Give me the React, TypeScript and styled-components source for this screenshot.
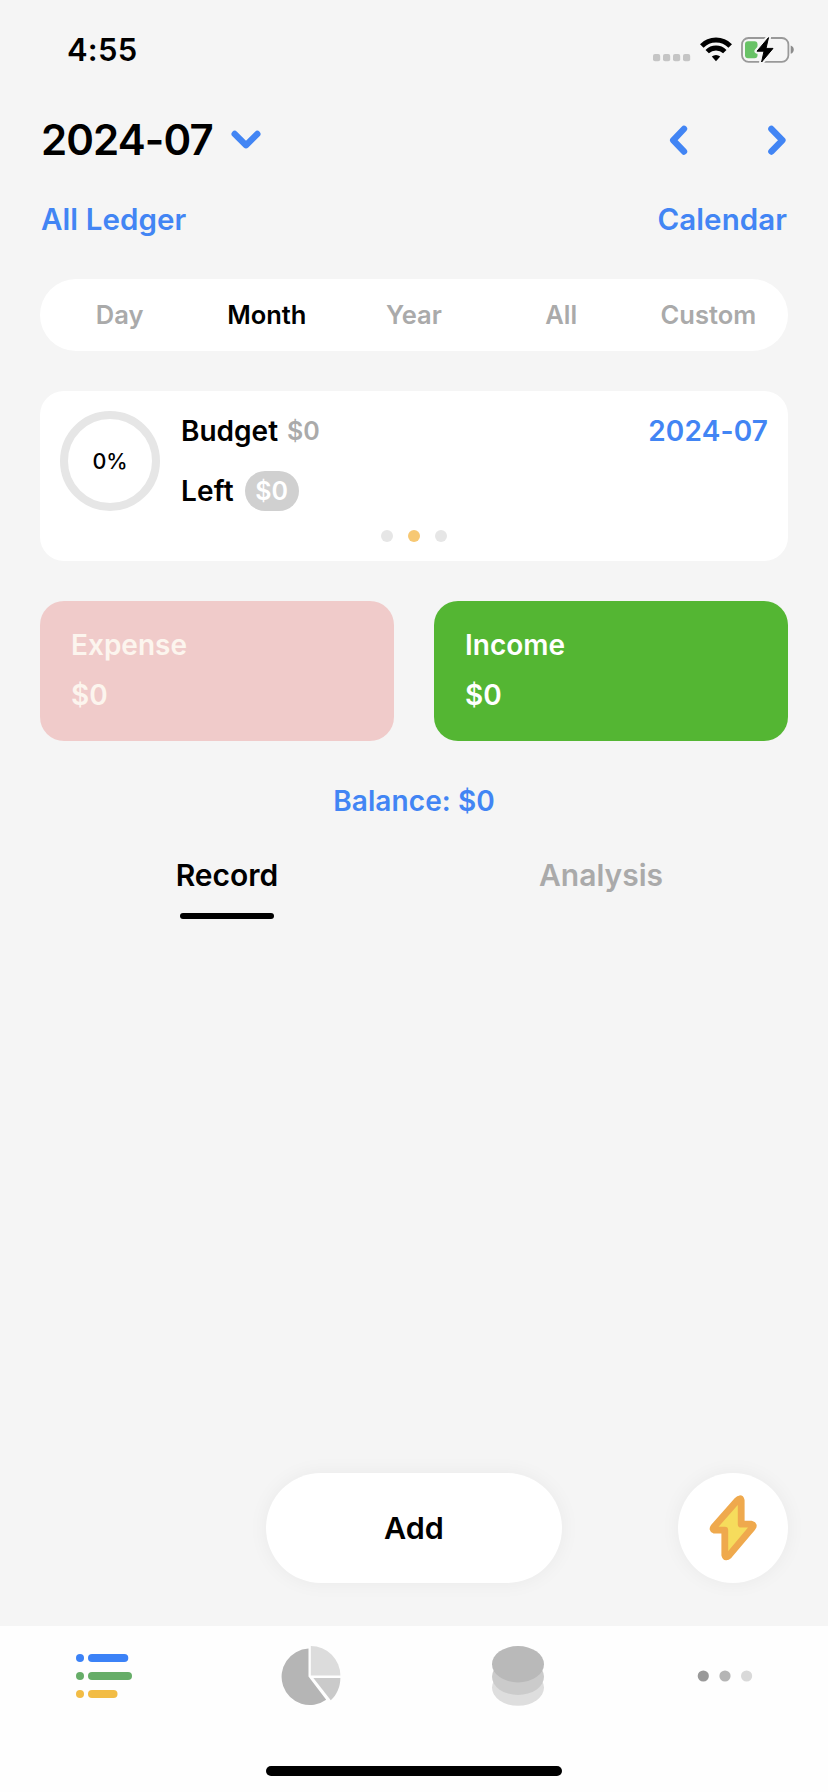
import React from 'react';
import styled, { createGlobalStyle } from 'styled-components';

const GlobalStyle = createGlobalStyle`
  * { box-sizing: border-box; }
  body { margin: 0; background: #f5f5f5; }
`;

const BLUE = '#4285f4';
const MUTED = '#aaaaaa';

const Screen = styled.div`
  width: 828px;
  height: 1792px;
  display: flex;
  flex-direction: column;
  background: #f5f5f5;
  color: #000;
  font-family: Inter, 'Liberation Sans', sans-serif;
  font-weight: 600;
  overflow: hidden;
`;

const Label = styled.span<{ $size: number; $spacing?: number; $color?: string; $weight?: number }>`
  font-size: ${(p) => p.$size}px;
  letter-spacing: ${(p) => p.$spacing ?? 0}px;
  margin-right: ${(p) => -(p.$spacing ?? 0)}px;
  color: ${(p) => p.$color ?? 'inherit'};
  font-weight: ${(p) => p.$weight ?? 600};
  line-height: 40px;
  white-space: nowrap;
`;

const StatusBar = styled.header`
  height: 100px;
  padding: 0 34px 0 67px;
  display: flex;
  align-items: center;
  justify-content: space-between;
`;

const StatusIcons = styled.div`
  display: flex;
  align-items: center;
  gap: 9px;
`;

const HeaderRow = styled.div`
  height: 80px;
  padding: 0 40px 0 41px;
  display: flex;
  align-items: center;
  justify-content: space-between;
`;

const MonthPicker = styled.div`
  display: flex;
  align-items: center;
  gap: 17px;
`;

const Arrows = styled.div`
  display: flex;
  gap: 80px;
`;

const LinkRow = styled.nav`
  height: 78px;
  padding: 0 41px;
  display: flex;
  align-items: center;
  justify-content: space-between;
`;

const RangeTabs = styled.div`
  flex: none;
  margin: 21px 40px 0;
  height: 72px;
  padding: 0 6px;
  border-radius: 36px;
  background: #fff;
  display: grid;
  grid-template-columns: repeat(5, 1fr);
  align-items: center;
  justify-items: center;
`;

const BudgetCard = styled.section`
  flex: none;
  margin: 40px 40px 0;
  height: 170px;
  padding: 20px 20px 0;
  border-radius: 24px;
  background: #fff;
`;

const BudgetTop = styled.div`
  height: 100px;
  display: flex;
`;

const Ring = styled.div`
  width: 100px;
  height: 100px;
  border: 8px solid #e6e6e6;
  border-radius: 50%;
  display: flex;
  align-items: center;
  justify-content: center;
`;

const BudgetLines = styled.div`
  flex: 1;
  margin-left: 21px;
  display: flex;
  flex-direction: column;
  gap: 20px;
`;

const BudgetLine = styled.div`
  height: 40px;
  display: flex;
  align-items: center;
`;

const Amount = styled.div`
  margin-left: 9px;
`;

const Pill = styled.div`
  width: 54px;
  height: 40px;
  margin-left: 11px;
  border-radius: 20px;
  background: #d0d0d0;
  display: flex;
  justify-content: center;
`;

const Push = styled.div`
  margin-left: auto;
`;

const Pager = styled.div`
  margin-top: 19px;
  display: flex;
  justify-content: center;
  gap: 15px;
`;

const PageDot = styled.i<{ $active?: boolean }>`
  width: 12px;
  height: 12px;
  border-radius: 50%;
  background: ${(p) => (p.$active ? '#f7c873' : '#e6e6e6')};
`;

const Totals = styled.div`
  flex: none;
  margin: 40px 40px 0;
  display: grid;
  grid-template-columns: 1fr 1fr;
  gap: 40px;
`;

const TotalCard = styled.div<{ $bg: string; $fg: string }>`
  height: 140px;
  padding: 24px 31px;
  border-radius: 24px;
  background: ${(p) => p.$bg};
  color: ${(p) => p.$fg};
  display: flex;
  flex-direction: column;
  gap: 10px;
`;

const Balance = styled.div`
  margin-top: 40px;
  height: 40px;
  display: flex;
  justify-content: center;
`;

const ViewTabs = styled.div`
  margin: 34px 40px 0;
  display: grid;
  grid-template-columns: 1fr 1fr;
`;

const ViewTab = styled.div`
  display: flex;
  flex-direction: column;
  align-items: center;
`;

const Underline = styled.i`
  width: 94px;
  height: 6px;
  margin-top: 18px;
  border-radius: 3px;
  background: #000;
`;

const Records = styled.main`
  flex: 1;
`;

const Actions = styled.div`
  flex: none;
  height: 110px;
  margin: 0 40px 43px;
  display: grid;
  grid-template-columns: 1fr 296px 1fr;
`;

const RoundButton = styled.div`
  grid-column: 2;
  border-radius: 55px;
  background: #fff;
  box-shadow: 0 0 20px rgba(0, 0, 0, 0.05);
  display: flex;
  align-items: center;
  justify-content: center;
`;

const QuickButton = styled(RoundButton)`
  grid-column: 3;
  justify-self: end;
  width: 110px;
`;

const TabBar = styled.footer`
  flex: none;
  height: 166px;
  background: #fefefe;
  display: flex;
  flex-direction: column;
  align-items: center;
  justify-content: space-between;
  padding-bottom: 16px;
`;

const TabIcons = styled.div`
  width: 100%;
  height: 100px;
  display: grid;
  grid-template-columns: repeat(4, 1fr);
  align-items: center;
  justify-items: center;
`;

const HomeIndicator = styled.i`
  width: 296px;
  height: 10px;
  border-radius: 5px;
  background: #000;
`;

const Chevron = ({ d, w, h }: { d: string; w: number; h: number }) => (
  <svg width={w} height={h} viewBox={`0 0 ${w} ${h}`} fill="none" stroke={BLUE} strokeWidth="6.4" strokeLinecap="round" strokeLinejoin="round">
    <path d={d} />
  </svg>
);

const SignalDots = () => (
  <svg width="38" height="26" viewBox="0 0 38 26" fill="#c5c5c5">
    {[0, 10, 20, 30].map((x) => (
      <rect key={x} x={x} y="17" width="7.2" height="7.2" rx="2" />
    ))}
  </svg>
);

const Wifi = () => (
  <svg width="32" height="26" viewBox="0 0 32 26">
    <path d="M1.8 8.9A20 20 0 0 1 30.2 8.9" fill="none" stroke="#000" strokeWidth="5" />
    <path d="M7.2 14.6A12.6 12.6 0 0 1 24.8 14.6" fill="none" stroke="#000" strokeWidth="4.8" />
    <path d="M11.8 19.6A6.4 6.4 0 0 1 20.2 19.6L16 24.2Z" />
  </svg>
);

const Battery = () => (
  <svg width="53" height="26" viewBox="0 0 53 26">
    <rect x="1" y="1" width="46.4" height="23.8" rx="6.5" fill="none" stroke="#999" strokeWidth="1.8" />
    <path d="M49.7 8.6C51.6 9.2 52.8 10.8 52.8 12.7S51.6 16.2 49.7 16.8Z" fill="#8c8c8c" />
    <rect x="4" y="4.2" width="12.5" height="17" rx="3" fill="#68c266" />
    <path d="M27.5 0.6L16 14.2H23L20.6 25L32 11.4H25Z" fill="#000" stroke="#f5f5f5" strokeWidth="5" strokeLinejoin="round" />
    <path d="M27.5 0.6L16 14.2H23L20.6 25L32 11.4H25Z" fill="#000" stroke="#000" strokeWidth="1" strokeLinejoin="round" />
  </svg>
);

const Bolt = () => (
  <svg width="110" height="110" viewBox="0 0 110 110">
    <path
      d="M59.2 27.6Q62.4 24 63.2 27.5V51.2H73.5Q76.5 52 74.5 54.5L51 82.4Q47.6 85.6 46.8 82V57.2H36.5Q34 56.5 35.8 54Z"
      fill="#f6dc5c"
      stroke="#efa94d"
      strokeWidth="6.8"
      strokeLinejoin="round"
    />
  </svg>
);

const ListIcon = () => (
  <svg width="56" height="44" viewBox="0 0 56 44">
    {[
      ['#3b82f7', 0, 40.3],
      ['#66ad68', 18, 44],
      ['#f2bc45', 36, 29.5],
    ].map(([color, y, w]) => (
      <g key={color} fill={color as string}>
        <circle cx="4" cy={Number(y) + 4} r="4" />
        <rect x="12" y={y} width={w} height="8" rx="4" />
      </g>
    ))}
  </svg>
);

const PieIcon = () => (
  <svg width="60" height="60" viewBox="0 0 60 60">
    <path d="M27.5 2.6A28.2 28.2 0 1 0 45.2 53.7L27.5 30.6Z" fill="#b5b5b5" />
    <path d="M29.8 0A29.6 29.6 0 0 1 59.4 29.5H29.8Z" fill="#dcdcdc" />
    <path d="M32.4 31.9H59.4C59.2 40.8 56 48.4 49.8 54.3Z" fill="#cacaca" />
  </svg>
);

const CoinsIcon = () => (
  <svg width="52" height="60" viewBox="0 0 52 60">
    <ellipse cx="26" cy="41.6" rx="26" ry="18.2" fill="#dedede" />
    <ellipse cx="26" cy="30.8" rx="26" ry="18.2" fill="#cbcbcb" />
    <ellipse cx="26" cy="18.2" rx="26" ry="18.2" fill="#b9b9b9" />
  </svg>
);

const MoreIcon = () => (
  <svg width="56" height="12" viewBox="0 0 56 12">
    <circle cx="6.3" cy="6" r="5.6" fill="#999" />
    <circle cx="28" cy="6" r="5.6" fill="#b5b5b5" />
    <circle cx="49.6" cy="6" r="5.6" fill="#d9d9d9" />
  </svg>
);

const ranges = ['Day', 'Month', 'Year', 'All', 'Custom'];

export default function App() {
  return (
    <Screen>
      <GlobalStyle />
      <StatusBar>
        <Label $size={31} $spacing={0.2}>4:55</Label>
        <StatusIcons>
          <SignalDots />
          <Wifi />
          <Battery />
        </StatusIcons>
      </StatusBar>
      <HeaderRow>
        <MonthPicker>
          <Label $size={42} $spacing={-0.9}>2024-07</Label>
          <Chevron w={30} h={20} d="M3.7 4L15 15.2L26.3 4" />
        </MonthPicker>
        <Arrows>
          <Chevron w={20} h={30} d="M16 3.9L5.2 15.2L16 26.5" />
          <Chevron w={20} h={30} d="M3.4 3.9L14.4 15.2L3.4 26.5" />
        </Arrows>
      </HeaderRow>
      <LinkRow>
        <Label $size={29.5} $spacing={0.08} $color={BLUE}>All Ledger</Label>
        <Label $size={29.5} $spacing={0.08} $color={BLUE}>Calendar</Label>
      </LinkRow>
      <RangeTabs>
        {ranges.map((r) => (
          <Label key={r} $size={25.5} $color={r === 'Month' ? '#000' : MUTED}>{r}</Label>
        ))}
      </RangeTabs>
      <BudgetCard>
        <BudgetTop>
          <Ring>
            <Label $size={21.5} $weight={500}>0%</Label>
          </Ring>
          <BudgetLines>
            <BudgetLine>
              <Label $size={28}>Budget</Label>
              <Amount>
                <Label $size={25} $color={MUTED}>$0</Label>
              </Amount>
              <Push>
                <Label $size={28} $spacing={0.2} $color={BLUE}>2024-07</Label>
              </Push>
            </BudgetLine>
            <BudgetLine>
              <Label $size={28} $spacing={0.2}>Left</Label>
              <Pill>
                <Label $size={25} $color="#fff">$0</Label>
              </Pill>
            </BudgetLine>
          </BudgetLines>
        </BudgetTop>
        <Pager>
          <PageDot />
          <PageDot $active />
          <PageDot />
        </Pager>
      </BudgetCard>
      <Totals>
        <TotalCard $bg="#f0cbca" $fg="#fcf5ee">
          <Label $size={28}>Expense</Label>
          <Label $size={28}>$0</Label>
        </TotalCard>
        <TotalCard $bg="#54b633" $fg="#fff">
          <Label $size={28}>Income</Label>
          <Label $size={28}>$0</Label>
        </TotalCard>
      </Totals>
      <Balance>
        <Label $size={28} $spacing={0.1} $color={BLUE}>Balance: $0</Label>
      </Balance>
      <ViewTabs>
        <ViewTab>
          <Label $size={30}>Record</Label>
          <Underline />
        </ViewTab>
        <ViewTab>
          <Label $size={30} $color={MUTED}>Analysis</Label>
        </ViewTab>
      </ViewTabs>
      <Records />
      <Actions>
        <RoundButton>
          <Label $size={30.5}>Add</Label>
        </RoundButton>
        <QuickButton>
          <Bolt />
        </QuickButton>
      </Actions>
      <TabBar>
        <TabIcons>
          <ListIcon />
          <PieIcon />
          <CoinsIcon />
          <MoreIcon />
        </TabIcons>
        <HomeIndicator />
      </TabBar>
    </Screen>
  );
}
